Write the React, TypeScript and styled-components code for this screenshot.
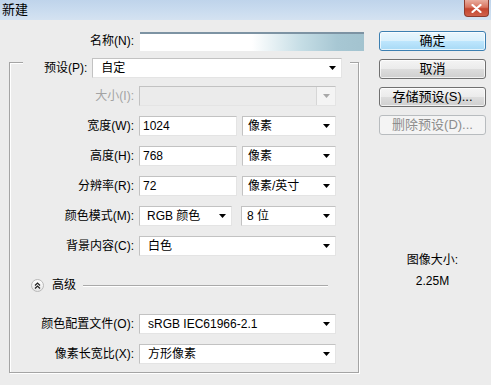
import styled, { createGlobalStyle } from "styled-components";

const GlobalStyle = createGlobalStyle`
  html, body {
    margin: 0;
    padding: 0;
    background: #ececec;
  }
  body {
    font-family: "Liberation Sans", "Noto Sans CJK SC", sans-serif;
    font-size: 12px;
    color: #000;
  }
`;

const Window = styled.div`
  width: 491px;
  height: 385px;
  background: #ececec;
  overflow: hidden;
  display: flex;
  flex-direction: column;
`;

const TitleBar = styled.div`
  height: 20px;
  flex: none;
  display: flex;
  justify-content: space-between;
  background: linear-gradient(180deg, #bfd4eb 0%, #cadcef 55%, #d4e2f1 100%);
  padding: 0 2px 0 2px;
  box-sizing: border-box;
`;

const Title = styled.span`
  font-size: 13px;
  line-height: 19px;
`;

const CloseButton = styled.div`
  width: 25px;
  height: 17px;
  box-sizing: border-box;
  border: 1px solid #8e3b2e;
  border-top: none;
  border-radius: 0 0 4px 4px;
  background: linear-gradient(180deg, #e9ad9f 0%, #d9745f 45%, #c4452f 55%, #d0614b 100%);
  display: flex;
  align-items: center;
  justify-content: center;
`;

const Body = styled.div`
  flex: 1;
  display: flex;
`;

const LeftPane = styled.div`
  width: 370px;
  display: flex;
  flex-direction: column;
`;

const NameRow = styled.div`
  margin-top: 11px;
  display: grid;
  grid-template-columns: 134px 224px;
  column-gap: 6px;
  align-items: center;
`;

const Label = styled.span<{ $disabled?: boolean }>`
  text-align: right;
  white-space: nowrap;
  line-height: 20px;
  color: ${(p) => (p.$disabled ? "#a3a3a3" : "#000")};
`;

const NameField = styled.div`
  height: 19px;
  box-sizing: border-box;
  border-top: 2px solid #7d93a3;
  background: linear-gradient(90deg, #ffffff 0%, #ffffff 50%, #c5dde5 72%, #a7c7d3 88%, #a3c3cf 100%);
`;

const GroupBox = styled.div`
  margin: 11px 0 0 9px;
  width: 350px;
  height: 311px;
  box-sizing: border-box;
  border: 1px solid #a4a4a4;
  box-shadow: 1px 1px 0 #fff, inset 1px 1px 0 #fff;
  display: flex;
  flex-direction: column;
`;

const PresetRow = styled.div`
  margin: -5px 0 0 13px;
  width: 327px;
  height: 20px;
  background: #ececec;
  display: flex;
  align-items: center;
  padding-left: 21px;
  box-sizing: border-box;
  gap: 5px;
`;

const FieldGrid = styled.div<{ $top: number }>`
  margin-top: ${(p) => p.$top}px;
  display: grid;
  grid-template-columns: 124px 197px;
  column-gap: 5px;
  row-gap: 10px;
  align-items: center;
`;

const Pair = styled.div<{ $gap: number }>`
  display: flex;
  gap: ${(p) => p.$gap}px;
`;

const Field = styled.div<{ $w?: number; $pad?: number; $disabled?: boolean }>`
  width: ${(p) => (p.$w ? `${p.$w}px` : "100%")};
  height: 20px;
  box-sizing: border-box;
  border: 1px solid;
  border-color: #c2c2c2 #e4e4e4 #e4e4e4 #c2c2c2;
  background: ${(p) => (p.$disabled ? "#ebebeb" : "#fff")};
  display: flex;
  align-items: center;
  padding-left: ${(p) => p.$pad ?? 3}px;
  white-space: nowrap;
  line-height: 18px;
`;

const FieldText = styled.span`
  flex: 1;
  overflow: hidden;
`;

const ArrowBox = styled.span<{ $disabled?: boolean }>`
  width: 18px;
  align-self: stretch;
  display: flex;
  align-items: center;
  justify-content: center;
  background: ${(p) => (p.$disabled ? "#f4f4f4" : "transparent")};
  border-left: ${(p) => (p.$disabled ? "1px solid #d6d6d6" : "none")};
`;

const AdvancedRow = styled.div`
  margin: 22px 30px 0 21px;
  height: 14px;
  display: flex;
  align-items: center;
`;

const Toggle = styled.span`
  width: 13px;
  height: 13px;
  box-sizing: border-box;
  border-radius: 50%;
  border: 1px solid #b9b9b9;
  background: linear-gradient(180deg, #ffffff, #e6e6e6);
  display: flex;
  align-items: center;
  justify-content: center;
`;

const AdvancedText = styled.span`
  margin-left: 8px;
  line-height: 14px;
`;

const Rule = styled.span`
  flex: 1;
  margin-left: 7px;
  height: 1px;
  background: #a9a9a9;
  box-shadow: 0 1px 0 #fff;
`;

const RightPane = styled.div`
  margin: 11px 0 0 9px;
  width: 107px;
  display: flex;
  flex-direction: column;
  gap: 8px;
`;

const Button = styled.div<{ $variant?: "default" | "disabled" }>`
  height: 20px;
  box-sizing: border-box;
  border-radius: 3px;
  border: 1px solid
    ${(p) => (p.$variant === "default" ? "#3c7fb1" : p.$variant === "disabled" ? "#b8bcbf" : "#707070")};
  background: ${(p) =>
    p.$variant === "default"
      ? "linear-gradient(180deg, #eaf6fd 0%, #d9f0fc 50%, #bee6fd 51%, #a7d9f5 100%)"
      : p.$variant === "disabled"
        ? "#f4f4f4"
        : "linear-gradient(180deg, #f4f4f4 0%, #ebebeb 50%, #dddddd 51%, #cfcfcf 100%)"};
  box-shadow: inset 0 0 0 1px ${(p) => (p.$variant === "disabled" ? "transparent" : "rgba(255,255,255,0.7)")};
  color: ${(p) => (p.$variant === "disabled" ? "#8d8d8d" : "#000")};
  display: flex;
  align-items: center;
  justify-content: center;
  line-height: 18px;
  font-size: 13px;
`;

const SizeInfo = styled.div`
  margin-top: 109px;
  display: flex;
  flex-direction: column;
  align-items: center;
  gap: 4px;
  line-height: 17px;
`;

const Arrow = ({ disabled }: { disabled?: boolean }) => (
  <svg width="7" height="4" viewBox="0 0 7 4">
    <polygon points="0,0 7,0 3.5,4" fill={disabled ? "#a8a8a8" : "#000"} />
  </svg>
);

const Select = ({ text, w, pad = 8, disabled }: { text: string; w?: number; pad?: number; disabled?: boolean }) => (
  <Field $w={w} $pad={pad} $disabled={disabled}>
    <FieldText>{text}</FieldText>
    <ArrowBox $disabled={disabled}>
      <Arrow disabled={disabled} />
    </ArrowBox>
  </Field>
);

const App = () => (
  <Window>
    <GlobalStyle />
    <TitleBar>
      <Title>新建</Title>
      <CloseButton>
        <svg width="11" height="9" viewBox="0 0 11 9">
          <path d="M1.5 1 L9.5 8 M9.5 1 L1.5 8" stroke="#fff" strokeWidth="2.2" strokeLinecap="round" />
        </svg>
      </CloseButton>
    </TitleBar>
    <Body>
      <LeftPane>
        <NameRow>
          <Label>名称(N):</Label>
          <NameField />
        </NameRow>
        <GroupBox>
          <PresetRow>
            <Label>预设(P):</Label>
            <Select text="自定" w={250} />
          </PresetRow>
          <FieldGrid $top={8}>
            <Label $disabled>大小(I):</Label>
            <Select text="" disabled />
            <Label>宽度(W):</Label>
            <Pair $gap={5}>
              <Field $w={98}>1024</Field>
              <Select text="像素" w={94} pad={5} />
            </Pair>
            <Label>高度(H):</Label>
            <Pair $gap={5}>
              <Field $w={98}>768</Field>
              <Select text="像素" w={94} pad={5} />
            </Pair>
            <Label>分辨率(R):</Label>
            <Pair $gap={5}>
              <Field $w={98}>72</Field>
              <Select text="像素/英寸" w={94} pad={5} />
            </Pair>
            <Label>颜色模式(M):</Label>
            <Pair $gap={9}>
              <Select text="RGB 颜色" w={93} pad={7} />
              <Select text="8 位" w={95} pad={5} />
            </Pair>
            <Label>背景内容(C):</Label>
            <Select text="白色" />
          </FieldGrid>
          <AdvancedRow>
            <Toggle>
              <svg width="7" height="7" viewBox="0 0 7 7">
                <path d="M1 3.5 L3.5 1 L6 3.5 M1 6.5 L3.5 4 L6 6.5" stroke="#222" strokeWidth="1.2" fill="none" />
              </svg>
            </Toggle>
            <AdvancedText>高级</AdvancedText>
            <Rule />
          </AdvancedRow>
          <FieldGrid $top={22}>
            <Label>颜色配置文件(O):</Label>
            <Select text="sRGB IEC61966-2.1" />
            <Label>像素长宽比(X):</Label>
            <Select text="方形像素" />
          </FieldGrid>
        </GroupBox>
      </LeftPane>
      <RightPane>
        <Button $variant="default">确定</Button>
        <Button>取消</Button>
        <Button>存储预设(S)...</Button>
        <Button $variant="disabled">删除预设(D)...</Button>
        <SizeInfo>
          <span>图像大小:</span>
          <span>2.25M</span>
        </SizeInfo>
      </RightPane>
    </Body>
  </Window>
);

export default App;
